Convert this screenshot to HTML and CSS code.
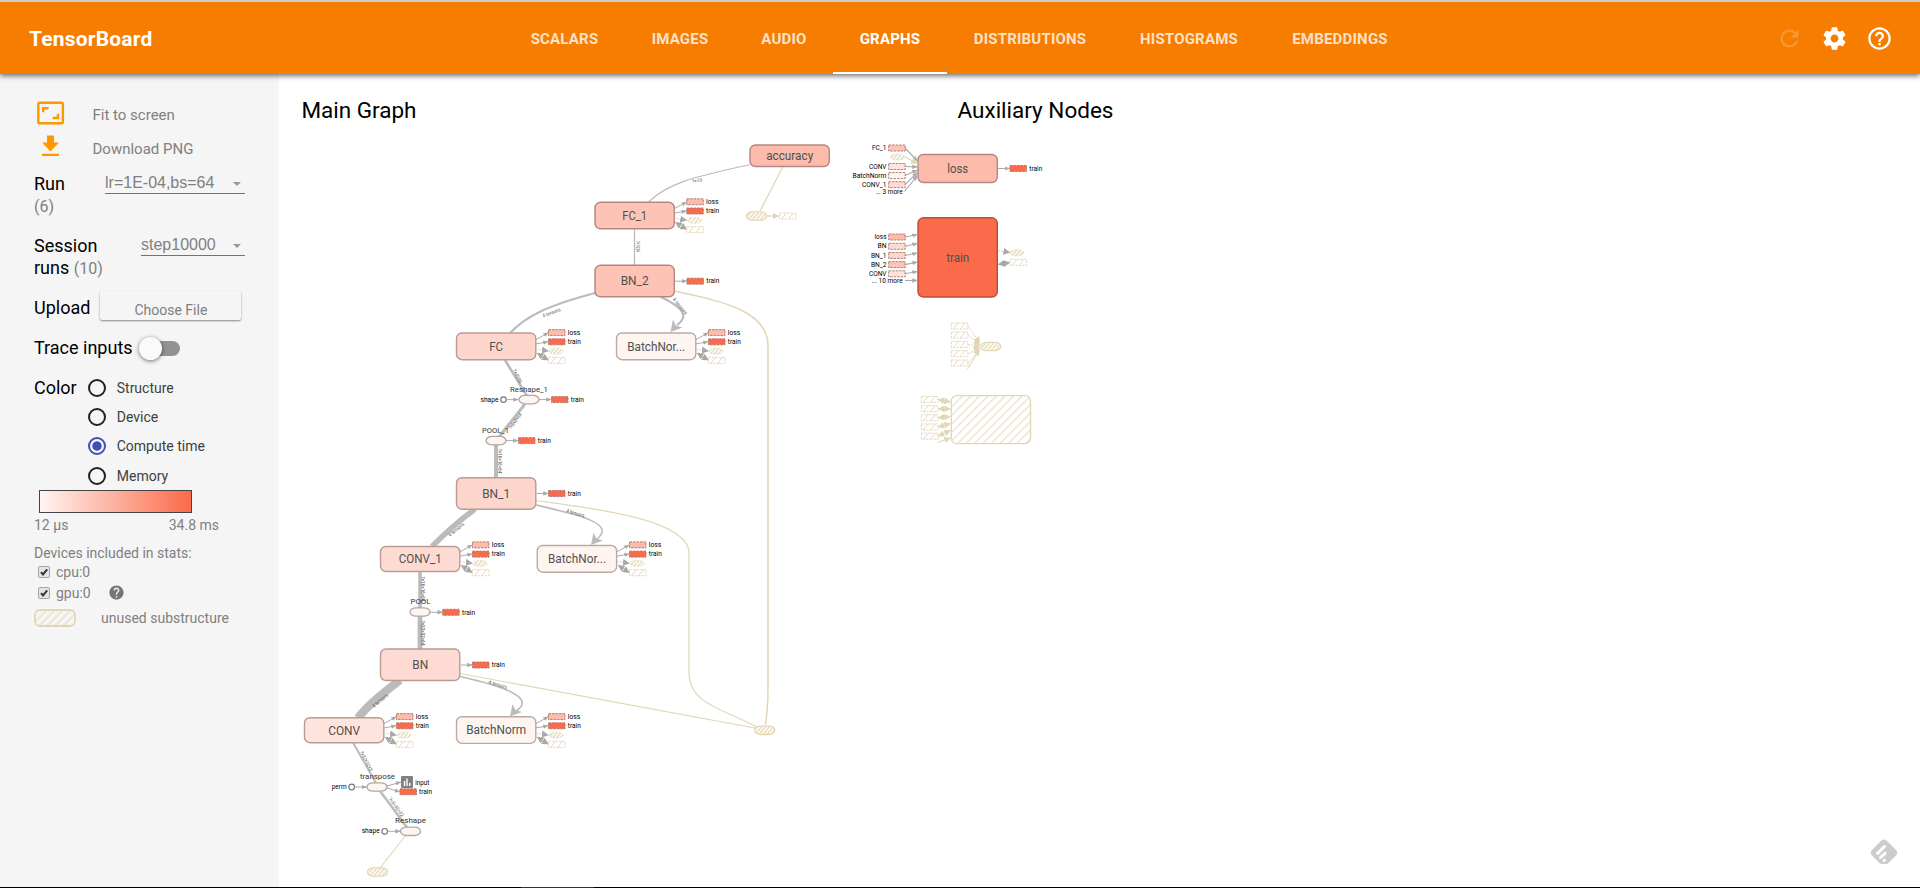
FILE: index.html
```html
<!DOCTYPE html>
<html lang="en">
<head>
<meta charset="utf-8">
<title>TensorBoard</title>
<link rel="stylesheet" href="styles.css">
</head>
<body>
<div class="app">
  <header class="toolbar">
    <div class="brand">TensorBoard</div>
    <nav class="tabs">
      <a class="tab">SCALARS</a><a class="tab">IMAGES</a><a class="tab">AUDIO</a><a class="tab active">GRAPHS</a><a class="tab">DISTRIBUTIONS</a><a class="tab">HISTOGRAMS</a><a class="tab">EMBEDDINGS</a>
    </nav>
    <div class="actions">
      <svg class="dim" width="27" height="27" viewBox="0 0 24 24"><path d="M17.65 6.35C16.2 4.9 14.21 4 12 4c-4.42 0-7.99 3.58-7.99 8s3.57 8 7.99 8c3.73 0 6.84-2.55 7.73-6h-2.08c-.82 2.33-3.04 4-5.65 4-3.31 0-6-2.69-6-6s2.69-6 6-6c1.66 0 3.14.69 4.22 1.78L13 11h7V4l-2.35 2.35z"/></svg>
      <svg width="27" height="27" viewBox="0 0 24 24"><path d="M19.43 12.98c.04-.32.07-.64.07-.98s-.03-.66-.07-.98l2.11-1.65c.19-.15.24-.42.12-.64l-2-3.46c-.12-.22-.39-.3-.61-.22l-2.49 1c-.52-.4-1.08-.73-1.69-.98l-.38-2.65C14.46 2.18 14.25 2 14 2h-4c-.25 0-.46.18-.49.42l-.38 2.65c-.61.25-1.17.59-1.69.98l-2.49-1c-.23-.09-.49 0-.61.22l-2 3.46c-.13.22-.07.49.12.64l2.11 1.65c-.04.32-.07.65-.07.98s.03.66.07.98l-2.11 1.65c-.19.15-.24.42-.12.64l2 3.46c.12.22.39.3.61.22l2.49-1c.52.4 1.08.73 1.69.98l.38 2.65c.03.24.24.42.49.42h4c.25 0 .46-.18.49-.42l.38-2.65c.61-.25 1.17-.59 1.69-.98l2.49 1c.23.09.49 0 .61-.22l2-3.46c.12-.22.07-.49-.12-.64l-2.11-1.65zM12 15.5c-1.93 0-3.5-1.57-3.5-3.5s1.57-3.5 3.5-3.5 3.5 1.57 3.5 3.5-1.57 3.5-3.5 3.5z"/></svg>
      <svg width="27" height="27" viewBox="0 0 24 24"><path d="M11 18h2v-2h-2v2zm1-16C6.48 2 2 6.48 2 12s4.48 10 10 10 10-4.48 10-10S17.52 2 12 2zm0 18c-4.41 0-8-3.59-8-8s3.59-8 8-8 8 3.59 8 8-3.59 8-8 8zm0-14c-2.21 0-4 1.79-4 4h2c0-1.1.9-2 2-2s2 .9 2 2c0 2-3 1.75-3 5h2c0-2.25 3-2.5 3-5 0-2.21-1.79-4-4-4z"/></svg>
    </div>
  </header>
  <div class="body">
    <aside class="side">
      <div class="cmd"><svg width="33" height="30" viewBox="0 0 33 30"><g fill="none" stroke="#ff9800"><rect x="4.3" y="4.800" width="24.6" height="20.4" rx="1.5" stroke-width="2.4"/><path d="M9.2 14.2V10.2H14.6M24 15.8V20H18.6" stroke-width="2.4"/></g></svg><span>Fit to screen</span></div>
      <div class="cmd second"><svg width="33" height="30" viewBox="0 0 33 30"><path fill="#ff9800" d="M13 3.500h7v7h5l-8.500 9L8 10.500h5zM8 21.700h17v2.400H8z"/></svg><span>Download PNG</span></div>
      <div class="row run"><div class="title">Run<br><small>(6)</small></div><div class="drop wide"><span>lr=1E-04,bs=64</span><i></i></div></div>
      <div class="row session"><div class="title">Session<br>runs <small>(10)</small></div><div class="drop narrow"><span>step10000</span><i></i></div></div>
      <div class="row upload"><div class="title">Upload</div><div class="button">Choose File</div></div>
      <div class="row trace"><div class="title">Trace inputs</div><div class="toggle"><b></b></div></div>
      <div class="row color"><div class="title">Color</div>
        <div class="radios">
          <label><i class="radio"></i>Structure</label>
          <label><i class="radio"></i>Device</label>
          <label><i class="radio on"></i>Compute time</label>
          <label><i class="radio"></i>Memory</label>
        </div>
      </div>
      <div class="gradient"></div>
      <div class="scale"><span>12 µs</span><span>34.8 ms</span></div>
      <div class="devices">Devices included in stats:</div>
      <div class="check"><svg width="12" height="12" viewBox="0 0 12 12"><rect x=".5" y=".5" width="11" height="11" rx="1.500" fill="#e4e4e4" stroke="#a5a5a5"/><path d="M3 6.200L5 8.500L9.200 3.300" fill="none" stroke="#333" stroke-width="2"/></svg><span>cpu:0</span></div>
      <div class="check"><svg width="12" height="12" viewBox="0 0 12 12"><rect x=".5" y=".5" width="11" height="11" rx="1.500" fill="#e4e4e4" stroke="#a5a5a5"/><path d="M3 6.200L5 8.500L9.200 3.300" fill="none" stroke="#333" stroke-width="2"/></svg><span>gpu:0</span><svg class="help" width="17" height="17" viewBox="0 0 24 24"><path fill="#757575" d="M12 2C6.480 2 2 6.480 2 12s4.480 10 10 10 10-4.480 10-10S17.520 2 12 2zm1 17h-2v-2h2v2zm2.070-7.750l-.9.92C13.450 12.900 13 13.500 13 15h-2v-.5c0-1.100.45-2.100 1.170-2.830l1.240-1.260c.37-.36.59-.86.59-1.410 0-1.100-.9-2-2-2s-2 .9-2 2H8c0-2.210 1.790-4 4-4s4 1.790 4 4c0 .88-.36 1.680-.93 2.250z"/></svg></div>
      <div class="unused"><svg width="42" height="18" viewBox="0 0 42 18"><clipPath id="sw"><rect x="1" y="1" width="40" height="16" rx="5"/></clipPath><path clip-path="url(#sw)" d="M-4 18L14 0M4 18L22 0M12 18L30 0M20 18L38 0M28 18L46 0" stroke="#ebe3cb" stroke-width="1.500"/><rect x="1" y="1" width="40" height="16" rx="5" fill="none" stroke="#e2d6b5" stroke-width="1.800"/></svg><span>unused substructure</span></div>
    </aside>
    <main class="stage">
      <svg id="graph" class="graph" width="1641" height="813" viewBox="279 74 1641 813">
        <defs>
          <pattern id="hatch" width="3" height="3" patternUnits="userSpaceOnUse" patternTransform="rotate(40)"><rect width="1.300" height="3" fill="#e2d6b5"/></pattern>
          <pattern id="hatchWide" width="6" height="6" patternUnits="userSpaceOnUse" patternTransform="rotate(45)"><rect width="1.200" height="6" fill="#e8dfc6"/></pattern>
          <marker id="gray" viewBox="0 0 10 10" refX="9.500" refY="5" markerWidth="5.500" markerHeight="5.500" markerUnits="userSpaceOnUse" orient="auto-start-reverse"><path d="M0 1L10 5L0 9Z" fill="#aaa"/></marker>
          <marker id="dark" viewBox="0 0 10 10" refX="9.500" refY="5" markerWidth="7" markerHeight="7" markerUnits="userSpaceOnUse" orient="auto-start-reverse"><path d="M0 0L10 5L0 10Z" fill="#a8a8a8"/></marker>
          <marker id="tan" viewBox="0 0 10 10" refX="9.500" refY="5" markerWidth="7" markerHeight="6.500" markerUnits="userSpaceOnUse" orient="auto-start-reverse"><path d="M0 0L10 5L0 10Z" fill="#e2d6b5"/></marker>
          <marker id="big" viewBox="0 0 12 12" refX="11" refY="6" markerWidth="14" markerHeight="14" markerUnits="userSpaceOnUse" orient="-52"><path d="M0 0L12 6L0 12L3 6Z" fill="#bbb" transform="rotate(180 6 6)"/></marker>
        </defs>
      </svg>
      <svg class="feedly" width="28" height="26" viewBox="0 0 28 26"><path d="M11.500 1.500Q14 -.5 16.500 1.500L26.500 11.500Q28 14 26.500 16L18.500 24Q17.500 25 16 25H12Q10.500 25 9.500 24L1.500 16Q0 14 1.500 11.500Z" fill="#ccc"/><path d="M7.500 14.500L14.500 7.500M10.500 18.500L15 14.300M14 21.500L14.400 21.200" stroke="#fff" stroke-width="3" stroke-linecap="round"/></svg>
    </main>
  </div>
  <div class="strip"><span></span></div>
</div>
<script src="graph.js"></script>
</body>
</html>
```

FILE: styles.css
```css
* { box-sizing: border-box; }
body { margin: 0; font-family: Roboto, "Noto Sans", sans-serif; overflow: hidden; background: #fff; }
.app { display: flex; flex-direction: column; height: 888px; }
.toolbar { position: relative; z-index: 2; display: grid; grid-template-columns: 504px 1fr 160px; align-items: stretch; height: 74px; flex: none; border-top: 2px solid #ccc; background: #f77d00; color: #fff; box-shadow: 0 2px 5px rgba(0,0,0,.55); }
.brand { align-self: center; padding: 2px 0 0 29px; font-size: 21px; font-weight: 700; letter-spacing: .2px; }
.tabs { display: grid; grid-template-columns: 121px 110px 98px 114px 166px 152px 150px; }
.tab { display: flex; align-items: center; justify-content: center; padding-top: 4px; font-size: 15px; font-weight: 700; letter-spacing: .2px; color: rgba(255,255,255,.78); border-bottom: 2px solid transparent; }
.tab.active { color: #fff; border-color: #fff; }
.actions { display: flex; align-items: center; gap: 18px; padding-top: 1px; padding-left: 16px; }
.actions svg { fill: #fff; flex: none; }
.actions .dim { opacity: .2; }
.body { display: flex; flex: 1; min-height: 0; }
.side { width: 279px; flex: none; background: #f5f5f5; padding: 24px 34px 0; color: #808080; font-size: 14px; }
.cmd { display: flex; height: 34px; font-size: 15px; }
.cmd span { padding: 8px 0 0 25.500px; line-height: 18px; }
.row { display: flex; color: #000; }
.title { font-size: 18px; line-height: 22px; white-space: nowrap; }
.title small { font-size: 16px; color: #808080; }
.run { height: 63px; padding-top: 7px; justify-content: space-between; }
.session { height: 57px; padding-top: 6px; justify-content: space-between; }
.drop { display: flex; justify-content: space-between; height: 21px; border-bottom: 1px solid #737373; font: 16px/20px "Liberation Sans", Arial, sans-serif; color: #808080; }
.wide { width: 140px; }
.narrow { width: 104px; }
.drop i { width: 0; height: 0; margin: 9px 4px 0 0; border: 4px solid transparent; border-top-color: #999; border-bottom: 0; }
.upload { height: 47px; padding-top: 5px; gap: 10px; }
.upload .title { padding-top: 6px; }
.button { width: 141px; height: 29px; padding-top: 11px; text-align: center; font-size: 14px; line-height: 17px; color: #808080; border-radius: 2px; box-shadow: 0 1px 2px rgba(0,0,0,.45); }
.trace { height: 39px; gap: 7px; align-items: flex-start; padding-top: 4px; }
.toggle { display: flex; align-items: center; width: 40px; height: 15px; margin-top: 4px; border-radius: 8px; background: linear-gradient(90deg, transparent 11px, #929292 11px); }
.toggle b { width: 23px; height: 23px; flex: none; margin-left: -1px; border-radius: 50%; background: #fafafa; box-shadow: 0 1px 4px rgba(0,0,0,.55); }
.color { height: 118px; padding-top: 2px; gap: 11px; }
.color .title { padding-top: 3px; }
.radios { display: flex; flex-direction: column; gap: 11.200px; padding-top: 5px; }
.radios label { display: flex; align-items: center; gap: 11px; height: 18px; font-size: 14px; color: #404040; white-space: nowrap; }
.radio { width: 18px; height: 18px; border: 2px solid #222; border-radius: 50%; }
.radio.on { border-color: #3f51b5; background: radial-gradient(circle, #3f51b5 4.300px, transparent 5px); }
.gradient { width: 153px; height: 23px; margin-left: 5px; border: 1px solid #444; background: linear-gradient(90deg, #fff5f0, #fb6a4a); }
.scale { display: flex; justify-content: space-between; width: 185px; padding-top: 3px; line-height: 18px; }
.devices { margin-top: 10px; line-height: 18px; white-space: nowrap; }
.check { display: flex; align-items: center; height: 20.500px; padding-left: 4px; gap: 6px; }
.help { margin-left: 11px; }
.unused { display: flex; align-items: center; gap: 25px; margin-top: 5px; height: 20px; white-space: nowrap; }
.stage { position: relative; flex: 1; }
.graph { display: block; }
.feedly { position: absolute; right: 22px; bottom: 22px; }
.strip { height: 1px; flex: none; background: #000; display: flex; }
.strip span { width: 73px; margin-left: 521px; background: #333; }
text { font-family: Roboto, "Noto Sans", sans-serif; }
.heading { font-size: 22px; fill: #000; }
.nodeText { font-size: 12.500px; fill: #505050; }
.opText { font-size: 8px; fill: #333; }
.tagText { font-size: 7px; fill: #000; }
.edgeText { font-size: 5px; fill: #555; }
```

FILE: graph.js
```javascript
const svg = document.getElementById('graph');
const TAN = '#e2d6b5';

function el(name, attrs, text) {
  const e = document.createElementNS('http://www.w3.org/2000/svg', name);
  for (const k in attrs) e.setAttribute(k, attrs[k]);
  if (text !== undefined) e.textContent = text;
  svg.appendChild(e);
  return e;
}
function line(d, stroke, width, extra) {
  return el('path', Object.assign({ d, fill: 'none', stroke, 'stroke-width': width }, extra));
}
function label(x, y, text, cls, anchor, length) {
  const a = { x, y, class: cls, 'text-anchor': anchor };
  if (length) { a.textLength = length; a.lengthAdjust = 'spacingAndGlyphs'; }
  el('text', a, text);
}
// Dashed reference box beside a node
function tag(x, y, fill) {
  const hatched = fill === 'hatch';
  el('rect', { x, y: y - 3, width: 16.5, height: 6, fill: hatched ? '#fff' : fill,
    stroke: hatched ? TAN : '#a8766c', 'stroke-width': .9, 'stroke-dasharray': '2.5 1' });
  if (hatched) line(`M${x + 2} ${y + 3}l5 -6M${x + 9} ${y + 3}l5 -6`, TAN, .9);
}
function pill(x, y, dashed) {
  el('ellipse', { cx: x, cy: y, rx: 7, ry: 3, fill: 'url(#hatch)', stroke: TAN, 'stroke-width': .8, 'stroke-dasharray': dashed ? '2 1' : 'none' });
}
function oval(x, y, hatched) {
  el('rect', { x: x - 10, y: y - 4.2, width: 20, height: 8.4, rx: 6, ry: 4.2,
    fill: hatched ? '#fff' : '#fff5f0', stroke: hatched ? TAN : '#b3a7a3', 'stroke-width': 1.3 });
  if (hatched) el('rect', { x: x - 9, y: y - 3.5, width: 18, height: 7, rx: 5, ry: 3.5, fill: 'url(#hatch)' });
}
function trainTag(x, y, from) {
  line(`M${from} ${y}H${x}`, '#aaa', 1, { 'marker-end': 'url(#gray)' });
  tag(x, y, '#fb6a4a');
  label(x + 19.3, y + 2.2, 'train', 'tagText', 'start', 13);
}
function fourTags(r, cy) {
  const x = r + 12.5;
  const ys = [-13.9, -4.7, 4.6, 13.9].map(d => cy + d);
  line(`M${r} ${cy - 7}L${x} ${ys[0]}`, '#aaa', 1, { 'marker-end': 'url(#gray)' });
  line(`M${r} ${cy - 2.7}L${x} ${ys[1]}`, '#aaa', 1, { 'marker-end': 'url(#gray)' });
  line(`M${r} ${cy + 2.5}L${x} ${ys[2]}`, TAN, 1, { 'stroke-dasharray': '2 1', 'marker-end': 'url(#dark)' });
  line(`M${r + 1} ${cy + 6.5}L${x} ${ys[3]}`, TAN, 1, { 'stroke-dasharray': '2 1', 'marker-start': 'url(#dark)', 'marker-end': 'url(#dark)' });
  tag(x, ys[0], '#fcbbab');
  tag(x, ys[1], '#fb6a4a');
  pill(x + 7.5, ys[2], true);
  tag(x, ys[3], 'hatch');
  label(x + 19.3, ys[0] + 2.2, 'loss', 'tagText', 'start', 12.5);
  label(x + 19.3, ys[1] + 2.2, 'train', 'tagText', 'start', 13);
}
function node(x, y, h, fill, stroke, text, width) {
  el('rect', { x, y, width: 79.3, height: h, rx: 5.5, fill, stroke, 'stroke-width': 1.4 });
  label(x + 39.7, y + h / 2 + 4.4, text, 'nodeText', 'middle', width);
}
function edgeLabel(x, y, angle, text, length) {
  el('text', { x: 0, y: 1.8, class: 'edgeText', 'text-anchor': 'middle', textLength: length,
    lengthAdjust: 'spacingAndGlyphs', transform: `translate(${x} ${y}) rotate(${angle})` }, text);
}
// Curved edge ending in a large arrowhead whose tip is at (x, y)
function bigArrow(d, x, y, width) {
  line(d, '#bbb', width);
  el('path', { d: `M${x} ${y}L${x + 2.5} ${y - 12.5}L${x + 5.3} ${y - 6.5}L${x + 12} ${y - 4.5}Z`, fill: '#bbb' });
}

label(301.5, 117.5, 'Main Graph', 'heading', 'start', 115);
label(957.5, 117.5, 'Auxiliary Nodes', 'heading', 'start', 156);

// Edges to unused substructure
line('M783 166.500L760 211', TAN, 1.3);
line('M674 291C720 301 767.500 310 768 345V690Q768 705 765.500 725', TAN, 1.5);
line('M536 500.500C590 508 689 519 689 553V673C689 703 720 708 757 727', TAN, 1.2);
line('M460 673.500L755 728', TAN, 1.2);
line('M406 835L380 868', TAN, 1.2);
line('M766.500 216H779', TAN, 1.2, { 'marker-end': 'url(#tan)' });

// Tensor edges, width follows tensor size
const G = '#bbb';
line('M750 164.500C700 176 670 181 648.500 202', G, 1.2);
line('M634.500 229V265', G, 1.3);
line('M595 293C550 305 527 315 510 333', G, 2);
bigArrow('M661 297C682 307 690 316 677 325', 670.500, 332, 2);
line('M505 360L527 396', G, 2.6);
line('M525 404L499 437', G, 3);
line('M496 444V478', G, 4);
line('M475 509Q452 526 432 546.500', G, 5.5);
bigArrow('M536 505C575 514 617 523 597 539', 591, 545, 1.6);
line('M420 571V609', G, 3.5);
line('M420 616V649', G, 4.8);
line('M400 680C382 694 368 705 358 718', G, 8.5);
bigArrow('M460 676.500C498 685 538 697 516 711', 510, 716.500, 1.6);
line('M353 742.500L376 783', G, 2);
line('M380 791L407.500 828', G, 2.4);

edgeLabel(697, 180.500, -10, '?×10', 10);
edgeLabel(638, 246.500, 90, '?×1024', 11);
edgeLabel(551.500, 312.500, -21, '4 tensors', 19);
edgeLabel(680, 306, 50, '4 tensors', 20);
edgeLabel(517.500, 376, 62, '?×4096', 15);
edgeLabel(515, 421, -53, '?×8×8×64', 19);
edgeLabel(499.500, 461, 90, '?×16×16×64', 25);
edgeLabel(456, 529.500, -40, '4 tensors', 19);
edgeLabel(575.500, 513, 17, '4 tensors', 19);
edgeLabel(423, 589, 90, '?×16×16×64', 25);
edgeLabel(423, 633, 90, '?×32×32×64', 25);
edgeLabel(380, 700.500, -40, '4 tensors', 19);
edgeLabel(498, 684.500, 16, '4 tensors', 19);
edgeLabel(366.500, 761, 62, '?×32×32×3', 22);
edgeLabel(396.500, 807, 54, '?×3×32×32', 22);

// Main graph
const S1 = '#b48780', S2 = '#b89b94', S3 = '#b9aaa6';
node(750, 145, 21.5, '#fcbbab', S1, 'accuracy', 47);
node(595, 202.300, 26.5, '#fdc4b6', S1, 'FC_1', 25);
node(595, 265.300, 31.5, '#fdc4b6', S1, 'BN_2', 28);
node(456.500, 333, 26.7, '#fdd6cb', S2, 'FC', 14);
node(616.500, 333, 26.7, '#fff5f0', S3, 'BatchNor...', 58);
node(456.500, 477.700, 31.5, '#fdd6cb', S2, 'BN_1', 28);
node(380.500, 546.500, 25, '#fddbd2', S2, 'CONV_1', 43);
node(537.300, 545.500, 26.7, '#fff5f0', S3, 'BatchNor...', 58);
node(380.500, 649, 31.5, '#fddbd2', S2, 'BN', 16);
node(304.500, 717.700, 25, '#fee4dc', S2, 'CONV', 32);
node(456.500, 716.700, 26.7, '#fff5f0', S3, 'BatchNorm', 60);

fourTags(674.300, 215.700);
trainTag(687, 281.200, 675);
fourTags(536, 346.500);
fourTags(696, 346.500);
trainTag(551.500, 399.600, 539);
trainTag(518.500, 440.600, 506);
trainTag(548.500, 493.500, 537);
fourTags(460, 558.800);
fourTags(617, 558.800);
trainTag(442.700, 612.300, 430);
trainTag(472.500, 665, 461);
fourTags(384, 730.500);
fourTags(536, 730.500);

oval(529, 399.600);
oval(496, 440.600);
oval(420, 612);
oval(377, 787);
oval(410.500, 831.300);
oval(377.500, 872, true);
oval(756.500, 216, true);
oval(764.700, 730.300, true);
tag(779.500, 216, 'hatch');

label(529, 391.500, 'Reshape_1', 'opText', 'middle', 38);
label(495.500, 432.500, 'POOL_1', 'opText', 'middle', 27);
label(420.500, 603.500, 'POOL', 'opText', 'middle', 20);
label(377.500, 779, 'transpose', 'opText', 'middle', 35);
label(410.500, 823, 'Reshape', 'opText', 'middle', 31);

[['shape', 503.500, 399.600, 518.500, 18], ['perm', 351.700, 787, 367, 15], ['shape', 384.700, 831.300, 400.500, 18]].forEach(([t, x, y, to, len]) => {
  el('circle', { cx: x, cy: y, r: 2.800, fill: '#fff', stroke: '#777', 'stroke-width': 1.2 });
  line(`M${x + 3} ${y}H${to}`, '#aaa', 1, { 'marker-end': 'url(#gray)' });
  label(x - 5, y + 2, t, 'tagText', 'end', len);
});

// Image summary beside transpose
line('M387 786L401 782', '#aaa', 1, { 'marker-end': 'url(#gray)' });
line('M387 788L400 792', '#aaa', 1, { 'marker-end': 'url(#gray)' });
el('rect', { x: 401, y: 776, width: 12, height: 12, rx: 1, fill: '#808080' });
line('M404.500 781V786M407 778.500V786M409.700 783V786', '#fff', 1.4);
label(415.300, 784.800, 'input', 'tagText', 'start', 14);
tag(400, 791.800, '#fb6a4a');
label(419, 794, 'train', 'tagText', 'start', 13);

// Auxiliary nodes
node(918, 154.500, 28, '#fcbbab', S1, 'loss', 21);
node(918, 217.800, 79.2, '#fb6a4a', '#b85038', 'train', 23);
trainTag(1010, 168.500, 998);

[['FC_1', 148, '#fdc4b6', 161, 14.5], ['', 157, '', 163.500], ['CONV', 166.500, '#fee4dc', 167, 17.5],
 ['BatchNorm', 175.600, '#fff5f0', 170, 34], ['CONV_1', 184.700, '#fddbd2', 172.500, 24.5]].forEach(([t, y, fill, to, len]) => {
  line(`M905 ${y}L917.500 ${to}`, fill ? '#aaa' : TAN, 1.100, { 'marker-end': fill ? 'url(#gray)' : 'url(#tan)' });
  if (fill) { tag(888.700, y, fill); label(886.500, y + 2, t, 'tagText', 'end', len); }
  else pill(897.500, y, true);
});
line('M904.500 191.500L917.500 175.500', '#aaa', 1.100, { 'marker-end': 'url(#gray)' });
label(902.700, 193.800, '... 3 more', 'tagText', 'end', 27);

[['loss', 237, '#fcbbab', 234.500, 12], ['BN', 246.300, '#fddbd2', 243.500, 9], ['BN_1', 255.500, '#fdd6cb', 253, 15.5],
 ['BN_2', 264.600, '#fdc4b6', 262, 15.5], ['CONV', 273.800, '#fee4dc', 271.500, 17.5]].forEach(([t, y, fill, to, len]) => {
  line(`M905 ${y}L917.500 ${to}`, '#aaa', 1.100, { 'marker-end': 'url(#gray)' });
  tag(888.700, y, fill);
  label(886.500, y + 2, t, 'tagText', 'end', len);
});
line('M905 280.500H917.500', '#aaa', 1.100, { 'marker-end': 'url(#gray)' });
label(902.700, 282.800, '... 10 more', 'tagText', 'end', 31);
line('M998 250.500L1010 252.500', TAN, 1, { 'stroke-dasharray': '2 1', 'marker-end': 'url(#dark)' });
line('M998 264.500L1010 262.500', TAN, 1, { 'marker-start': 'url(#dark)', 'marker-end': 'url(#dark)' });
pill(1017, 252.800, true);
tag(1010, 262.300, 'hatch');

[326, 335, 344.500, 353.700, 363].forEach((y, i) => {
  tag(951.300, y, 'hatch');
  line(`M968 ${y}L980 ${343 + i * 1.700}`, TAN, 1, { 'stroke-dasharray': '2 1', 'marker-end': 'url(#tan)' });
});
line('M967.500 369L979 350', TAN, 1.2);
el('path', { d: 'M974 346.500L979 340V353Z', fill: TAN });
oval(990.700, 346.500, true);

[399.500, 408.700, 417.800, 427, 436.200].forEach((y, i) => {
  const to = [402, 409, 416.500, 423.500, 430.500][i];
  tag(921.300, y, 'hatch');
  line(`M938 ${y}L950.500 ${to}`, TAN, 1, { 'marker-start': 'url(#tan)', 'marker-end': 'url(#tan)' });
});
line('M937.500 442.500L950.500 438', TAN, 1, { 'marker-end': 'url(#tan)' });
el('rect', { x: 951.300, y: 395.700, width: 79.2, height: 48, rx: 5.5, fill: '#fff' });
el('rect', { x: 951.300, y: 395.700, width: 79.2, height: 48, rx: 5.5, fill: 'url(#hatchWide)', stroke: TAN, 'stroke-width': 1.3 });
```
